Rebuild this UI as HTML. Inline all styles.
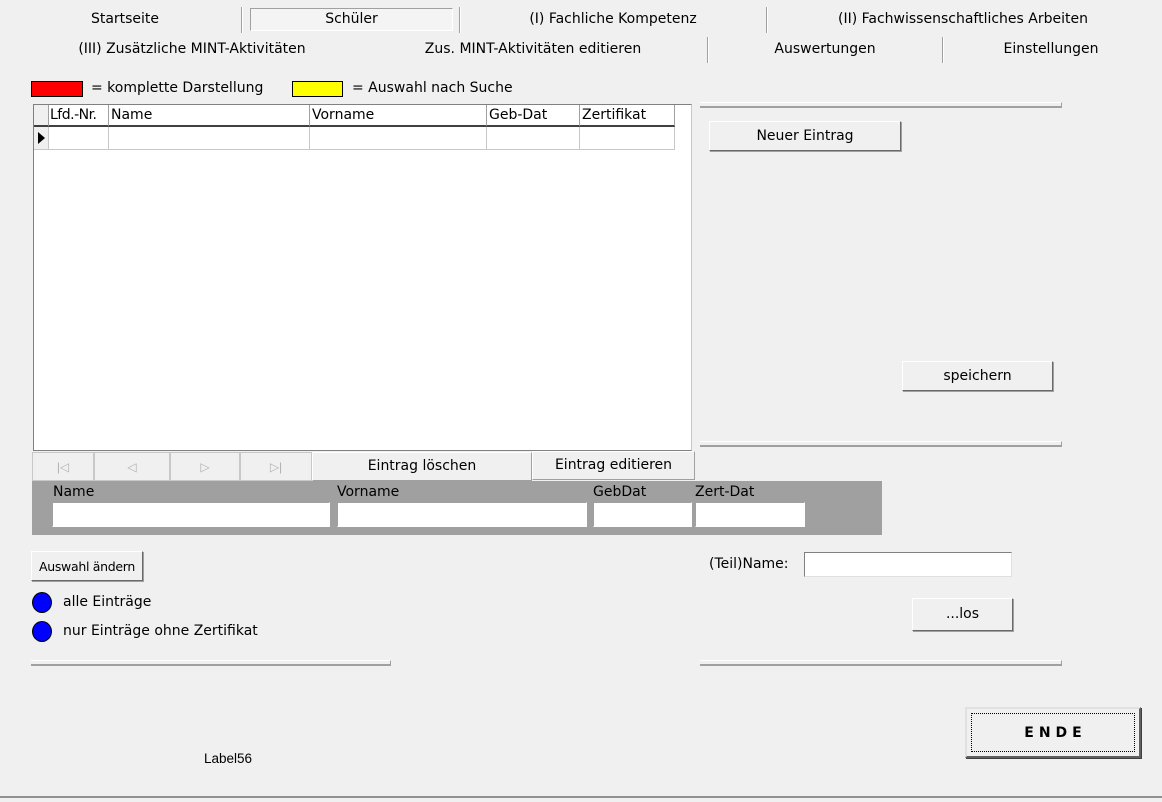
<!DOCTYPE html>
<html><head><meta charset="utf-8"><style>
*{box-sizing:border-box;margin:0;padding:0}
body{width:1162px;height:802px;background:#f0f0f0;position:relative;overflow:hidden;font-family:"Liberation Sans","DejaVu Sans",sans-serif;font-size:13px;color:#000}
.a{position:absolute;white-space:nowrap}
.t{font-family:"DejaVu Sans","Liberation Sans",sans-serif;font-size:14px;line-height:17px}
.c{text-align:center}
.vs{position:absolute;width:2px;border-left:1px solid #a0a0a0;border-right:1px solid #fff}
.hs{position:absolute;height:6px;border-top:1px solid #fff;border-bottom:2px solid #a0a0a0;border-right:1px solid #a0a0a0;background:#f0f0f0}
.btn{position:absolute;background:#f0f0f0;border:1px solid;border-color:#fff #6a6a6a #6a6a6a #fff;box-shadow:1px 1px 0 #a0a0a0;display:flex;align-items:center;justify-content:center}
.inp{position:absolute;background:#fff;border:1px solid;border-color:#a0a0a0 #fff #fff #a0a0a0}
.hd{position:absolute;top:0;height:22px;border-right:1px solid #a0a0a0;border-bottom:2px solid #404040;padding-left:2px;line-height:20px;font-size:14px;font-family:"DejaVu Sans",sans-serif}
.cl{position:absolute;top:22px;height:23px;border-right:1px solid #c8c8c8;border-bottom:1px solid #c8c8c8}
.nav{position:absolute;top:452px;height:29px;background:#f0f0f0;border:1px solid #c8c8c8;color:#b0b0b0;font-size:12px;display:flex;align-items:center;justify-content:center}
.dot{position:absolute;width:20px;height:21px;border-radius:50%;background:#0000ff;border:1px solid #000}
</style></head><body>
<div class="a t c" style="left:60px;top:11px;width:130px">Startseite</div>
<div class="vs" style="left:241px;top:7px;height:26px"></div>
<div class="a t c" style="left:250px;top:8px;width:203px;height:23px;border:1px solid;border-color:#a0a0a0 #fff #fff #a0a0a0;background:#f4f4f4;line-height:21px;font-size:14px">Schüler</div>
<div class="vs" style="left:459px;top:7px;height:26px"></div>
<div class="a t c" style="left:470px;top:11px;width:286px">(I) Fachliche Kompetenz</div>
<div class="vs" style="left:766px;top:7px;height:26px"></div>
<div class="a t c" style="left:800px;top:11px;width:326px">(II) Fachwissenschaftliches Arbeiten</div>
<div class="a t c" style="left:20px;top:41px;width:344px">(III) Zusätzliche MINT-Aktivitäten</div>
<div class="a t c" style="left:380px;top:41px;width:306px">Zus. MINT-Aktivitäten editieren</div>
<div class="vs" style="left:707px;top:37px;height:26px"></div>
<div class="a t c" style="left:760px;top:41px;width:130px">Auswertungen</div>
<div class="vs" style="left:942px;top:37px;height:26px"></div>
<div class="a t c" style="left:990px;top:41px;width:122px">Einstellungen</div>

<div class="a" style="left:31px;top:81px;width:52px;height:16px;background:#ff0000;border:1px solid #000"></div>
<div class="a t" style="left:91px;top:80px">= komplette Darstellung</div>
<div class="a" style="left:292px;top:81px;width:51px;height:16px;background:#ffff00;border:1px solid #000"></div>
<div class="a t" style="left:352px;top:80px">= Auswahl nach Suche</div>

<div class="a" style="left:33px;top:104px;width:659px;height:347px;background:#fff;border:1px solid #808080;border-right-color:#c8c8c8;overflow:hidden">
 <div class="hd" style="left:0;width:15px;background:#f0f0f0"></div>
 <div class="hd" style="left:15px;width:60px;letter-spacing:-0.5px;padding-left:1px">Lfd.-Nr.</div>
 <div class="hd" style="left:75px;width:201px">Name</div>
 <div class="hd" style="left:276px;width:177px">Vorname</div>
 <div class="hd" style="left:453px;width:93px">Geb-Dat</div>
 <div class="hd" style="left:546px;width:95px">Zertifikat</div>
 <div class="cl" style="left:0;width:15px;background:#f0f0f0"><div style="position:absolute;left:4px;top:5px;width:0;height:0;border-top:6px solid transparent;border-bottom:6px solid transparent;border-left:7px solid #000"></div></div>
 <div class="cl" style="left:15px;width:60px"></div>
 <div class="cl" style="left:75px;width:201px"></div>
 <div class="cl" style="left:276px;width:177px"></div>
 <div class="cl" style="left:453px;width:93px"></div>
 <div class="cl" style="left:546px;width:95px"></div>
</div>

<div class="nav" style="left:32px;width:62px">|◁</div>
<div class="nav" style="left:94px;width:76px">◁</div>
<div class="nav" style="left:170px;width:70px">▷</div>
<div class="nav" style="left:240px;width:72px">▷|</div>
<div class="btn t" style="left:312px;top:452px;width:220px;height:29px;box-shadow:none;border-color:#fff #a0a0a0 #a0a0a0 #fff">Eintrag löschen</div>
<div class="btn t" style="left:532px;top:451px;width:163px;height:29px;box-shadow:none;border-color:#fff #a0a0a0 #a0a0a0 #fff">Eintrag editieren</div>

<div class="a" style="left:32px;top:481px;width:850px;height:54px;background:#a0a0a0"></div>
<div class="a t" style="left:53px;top:484px">Name</div>
<div class="a t" style="left:337px;top:484px">Vorname</div>
<div class="a t" style="left:593px;top:484px">GebDat</div>
<div class="a t" style="left:695px;top:484px">Zert-Dat</div>
<div class="inp" style="left:52px;top:502px;width:278px;height:25px"></div>
<div class="inp" style="left:337px;top:502px;width:250px;height:25px"></div>
<div class="inp" style="left:593px;top:502px;width:99px;height:25px"></div>
<div class="inp" style="left:695px;top:502px;width:110px;height:25px"></div>

<div class="btn" style="left:31px;top:551px;width:112px;height:30px;font-size:12.5px;font-family:'DejaVu Sans',sans-serif;letter-spacing:-0.3px">Auswahl ändern</div>
<div class="dot" style="left:32px;top:592px"></div>
<div class="a t" style="left:63px;top:594px">alle Einträge</div>
<div class="dot" style="left:32px;top:621px"></div>
<div class="a t" style="left:63px;top:623px">nur Einträge ohne Zertifikat</div>
<div class="hs" style="left:31px;top:660px;width:360px"></div>
<div class="a" style="left:204px;top:751px;font-size:13.5px">Label56</div>

<div class="hs" style="left:700px;top:102px;width:362px"></div>
<div class="btn t" style="left:709px;top:121px;width:192px;height:30px">Neuer Eintrag</div>
<div class="btn t" style="left:902px;top:361px;width:151px;height:30px">speichern</div>
<div class="hs" style="left:700px;top:441px;width:362px"></div>
<div class="a t" style="left:709px;top:556px">(Teil)Name:</div>
<div class="inp" style="left:804px;top:552px;width:208px;height:25px;border-color:#808080 #e0e0e0 #e0e0e0 #808080"></div>
<div class="btn t" style="left:912px;top:598px;width:101px;height:33px">...los</div>
<div class="hs" style="left:700px;top:660px;width:362px"></div>

<div class="a" style="left:965px;top:707px;width:176px;height:51px;background:#f0f0f0;border:2px solid;border-color:#e0e0e0 #606060 #606060 #e0e0e0;box-shadow:1px 1px 0 #404040">
 <div style="position:absolute;left:4px;top:4px;right:4px;bottom:4px;border:1px dotted #000;display:flex;align-items:center;justify-content:center;font-weight:bold;font-size:14px;letter-spacing:5px;padding-left:5px;font-family:'DejaVu Sans',sans-serif">ENDE</div>
</div>

<div class="a" style="left:0;top:796px;width:1162px;height:2px;background:#909090"></div>
<div class="a" style="left:0;top:798px;width:1162px;height:4px;background:#f0f0f0"></div>
</body></html>
